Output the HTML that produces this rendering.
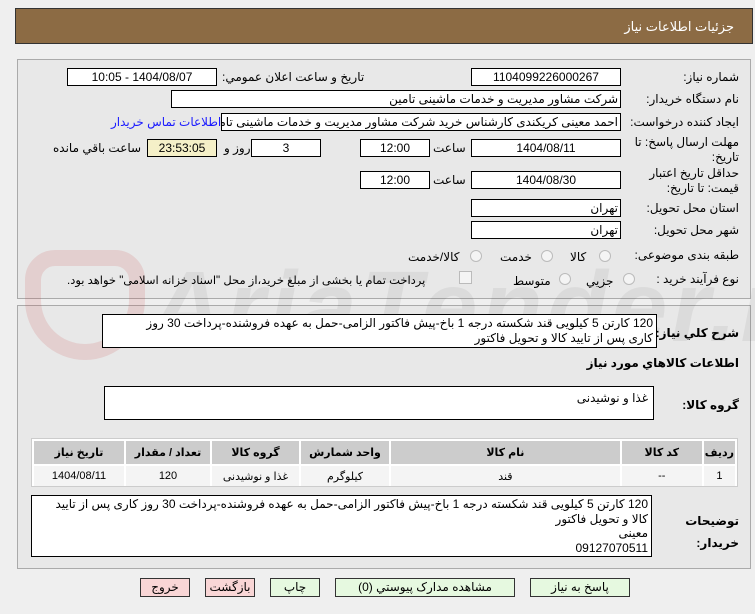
<!DOCTYPE html>
<html><head><meta charset="utf-8"><style>
*{box-sizing:border-box}
body{margin:0;width:755px;height:614px;background:#efefef;font-family:"Liberation Sans","DejaVu Sans",sans-serif;font-size:12px;color:#000;position:relative;overflow:hidden}
.a{position:absolute}
.hdr{left:15px;top:8px;width:738px;height:36px;background:#8c6b44;border:1px solid #333}
.hdr span{position:absolute;right:18px;top:10px;color:#fff;font-size:13px}
.panel{border:1px solid #aaa;background:#e8e8e8}
.f{position:absolute;background:#fff;border:1px solid #000;height:18px;line-height:16px;text-align:center;font-size:12px;white-space:nowrap;overflow:hidden}
.r{text-align:right;padding-right:2px}
.l{position:absolute;right:16px;font-size:12px;text-align:right;white-space:nowrap}
.t{position:absolute;font-size:12px;white-space:nowrap}
.rad{position:absolute;width:12px;height:12px;border-radius:50%;border:1px solid #bbb;background:#f4f4f4}
table{border-collapse:separate;border-spacing:2px;font-size:11px}
th{background:#ccc;height:23px;font-weight:bold}
td{background:#f4f4f4;height:20px;text-align:center}
.btn{position:absolute;top:578px;height:19px;border:1px solid #333;font-size:12px;text-align:center;line-height:17px}
.g{background:#e6f9e0}.p{background:#f9d6d6}
.wm{position:absolute;left:150px;top:250px;font-size:100px;font-weight:bold;color:#000;opacity:.05;font-style:italic;letter-spacing:4px}
</style></head><body dir="rtl">
<div class="a hdr"><span>جزئيات اطلاعات نياز</span></div>
<div class="a panel" style="left:17px;top:59px;width:734px;height:240px"></div>
<div class="a panel" style="left:17px;top:305px;width:734px;height:264px"></div>
<div class="a" style="left:25px;top:250px;width:120px;height:110px;border:16px solid rgba(200,60,60,.14);border-radius:30px 30px 60px 60px"></div>
<div class="wm" dir="ltr">AriaTender.net</div>

<div class="l" style="top:70px">شماره نياز:</div>
<div class="f" style="left:471px;top:68px;width:150px">1104099226000267</div>
<div class="t" style="left:222px;top:70px">تاريخ و ساعت اعلان عمومي:</div>
<div class="f" style="left:67px;top:68px;width:150px">1404/08/07 - 10:05</div>

<div class="l" style="top:92px">نام دستگاه خريدار:</div>
<div class="f r" style="left:171px;top:90px;width:450px">شرکت مشاور مدیریت و خدمات ماشینی تامین</div>

<div class="l" style="top:115px">ايجاد کننده درخواست:</div>
<div class="f r" style="left:221px;top:113px;width:400px">احمد معینی کریکندی کارشناس خرید شرکت مشاور مدیریت و خدمات ماشینی تامین</div>
<div class="t" style="left:111px;top:115px;color:#1a1aff">اطلاعات تماس خريدار</div>

<div class="l" style="top:135px;line-height:15px">مهلت ارسال پاسخ: تا<br>تاريخ:</div>
<div class="f" style="left:471px;top:139px;width:150px">1404/08/11</div>
<div class="t" style="left:433px;top:141px">ساعت</div>
<div class="f" style="left:360px;top:139px;width:70px">12:00</div>
<div class="f" style="left:251px;top:139px;width:70px">3</div>
<div class="t" style="left:224px;top:141px">روز و</div>
<div class="f" style="left:147px;top:139px;width:70px;background:#f5f0c8">23:53:05</div>
<div class="t" style="left:53px;top:141px">ساعت باقي مانده</div>

<div class="l" style="top:166px;line-height:15px">حداقل تاريخ اعتبار<br>قيمت: تا تاريخ:</div>
<div class="f" style="left:471px;top:171px;width:150px">1404/08/30</div>
<div class="t" style="left:433px;top:173px">ساعت</div>
<div class="f" style="left:360px;top:171px;width:70px">12:00</div>

<div class="l" style="top:201px">استان محل تحويل:</div>
<div class="f r" style="left:471px;top:199px;width:150px">تهران</div>
<div class="l" style="top:223px">شهر محل تحويل:</div>
<div class="f r" style="left:471px;top:221px;width:150px">تهران</div>

<div class="l" style="top:248px">طبقه بندی موضوعی:</div>
<div class="rad" style="left:599px;top:250px"></div><div class="t" style="left:570px;top:250px">کالا</div>
<div class="rad" style="left:541px;top:250px"></div><div class="t" style="left:500px;top:250px">خدمت</div>
<div class="rad" style="left:470px;top:250px"></div><div class="t" style="left:408px;top:250px">کالا/خدمت</div>

<div class="l" style="top:272px">نوع فرآيند خريد :</div>
<div class="rad" style="left:623px;top:273px"></div><div class="t" style="left:586px;top:274px">جزيي</div>
<div class="rad" style="left:559px;top:273px"></div><div class="t" style="left:513px;top:274px">متوسط</div>
<div class="a" style="left:459px;top:271px;width:13px;height:13px;border:1px solid #bbb;background:#f4f4f4"></div>
<div class="t" style="left:67px;top:273px;font-size:11.5px">پرداخت تمام يا بخشی از مبلغ خريد،از محل "اسناد خزانه اسلامی" خواهد بود.</div>

<div class="l" style="top:326px;font-weight:bold">شرح کلي نياز:</div>
<div class="f r" style="left:102px;top:314px;width:555px;height:34px;text-align:right;line-height:15px;white-space:normal;padding:1px 3px 1px 30px">120 کارتن 5 کیلویی قند شکسته درجه 1 باخ-پیش فاکتور الزامی-حمل به عهده فروشنده-پرداخت 30 روز کاری پس از تایید کالا و تحویل فاکتور</div>
<div class="l" style="top:356px;font-weight:bold">اطلاعات کالاهاي مورد نياز</div>

<div class="l" style="top:398px;font-weight:bold">گروه کالا:</div>
<div class="f" style="left:104px;top:386px;width:550px;height:34px;text-align:right;padding:3px 5px">غذا و نوشیدنی</div>

<div class="a" style="left:31px;top:438px;width:707px;height:49px;background:#fff;border:1px solid #ccc">
<table style="width:705px"><tr><th style="width:27px">رديف</th><th style="width:80px">کد کالا</th><th>نام کالا</th><th style="width:88px">واحد شمارش</th><th style="width:87px">گروه کالا</th><th style="width:84px">تعداد / مقدار</th><th style="width:90px">تاريخ نياز</th></tr>
<tr><td>1</td><td>--</td><td>قند</td><td>کیلوگرم</td><td>غذا و نوشیدنی</td><td>120</td><td>1404/08/11</td></tr></table></div>

<div class="l" style="top:510px;font-weight:bold;line-height:22px">توضيحات<br>خريدار:</div>
<div class="f" style="left:31px;top:495px;width:621px;height:62px;text-align:right;line-height:14.5px;white-space:normal;padding:1px 3px 1px 20px">120 کارتن 5 کیلویی قند شکسته درجه 1 باخ-پیش فاکتور الزامی-حمل به عهده فروشنده-پرداخت 30 روز کاری پس از تایید کالا و تحویل فاکتور<br>معینی<br>09127070511</div>

<div class="btn g" style="left:530px;width:100px">پاسخ به نياز</div>
<div class="btn g" style="left:335px;width:180px">مشاهده مدارک پيوستي (0)</div>
<div class="btn g" style="left:270px;width:50px">چاپ</div>
<div class="btn p" style="left:205px;width:50px">بازگشت</div>
<div class="btn p" style="left:140px;width:50px">خروج</div>
</body></html>
